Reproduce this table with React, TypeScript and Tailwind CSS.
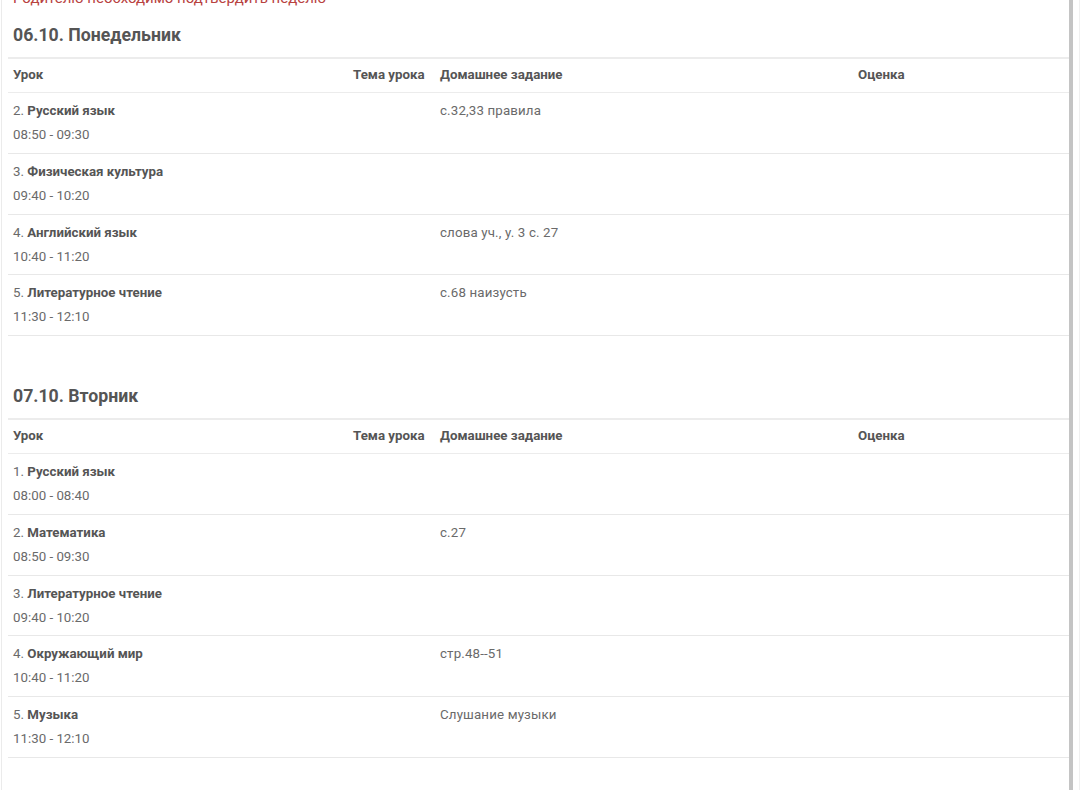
import React from "react";

type Lesson = { n: number; name: string; time: string; hw?: string };

const days: { title: string; lessons: Lesson[] }[] = [
  {
    title: "06.10. Понедельник",
    lessons: [
      { n: 2, name: "Русский язык", time: "08:50 - 09:30", hw: "с.32,33 правила" },
      { n: 3, name: "Физическая культура", time: "09:40 - 10:20" },
      { n: 4, name: "Английский язык", time: "10:40 - 11:20", hw: "слова уч., у. 3 с. 27" },
      { n: 5, name: "Литературное чтение", time: "11:30 - 12:10", hw: "с.68 наизусть" },
    ],
  },
  {
    title: "07.10. Вторник",
    lessons: [
      { n: 1, name: "Русский язык", time: "08:00 - 08:40" },
      { n: 2, name: "Математика", time: "08:50 - 09:30", hw: "с.27" },
      { n: 3, name: "Литературное чтение", time: "09:40 - 10:20" },
      { n: 4, name: "Окружающий мир", time: "10:40 - 11:20", hw: "стр.48--51" },
      { n: 5, name: "Музыка", time: "11:30 - 12:10", hw: "Слушание музыки" },
    ],
  },
];

const cols = "grid grid-cols-[340px_87px_418px_1fr]";

function Day({ title, lessons }: { title: string; lessons: Lesson[] }) {
  return (
    <section>
      <h2 className="pl-[5px] text-[17.7px] leading-[24px] font-bold text-[#555]">{title}</h2>
      <div className="mt-[10px]">
        <div className={`${cols} h-[36px] items-center border-t-2 border-b border-[#ececec] text-[13.3px] font-bold text-[#555]`}>
          <div className="px-[5px] pb-[2px]">Урок</div>
          <div className="px-[5px] pb-[2px]">Тема урока</div>
          <div className="px-[5px] pb-[2px]">Домашнее задание</div>
          <div className="px-[5px] pb-[2px]">Оценка</div>
        </div>
        {lessons.map((l, i) => (
          <div key={i} className={`${cols} h-[60.75px] box-border border-b border-[#e8e8e8] text-[13.3px] leading-[24px] text-[#6a6a6a]`}>
            <div className="px-[5px] pt-[6px]">
              <div>
                {l.n}. <span className="font-bold text-[#555]">{l.name}</span>
              </div>
              <div>{l.time}</div>
            </div>
            <div className="px-[5px] pt-[6px]"></div>
            <div className="px-[5px] pt-[6px] tracking-[0.15px]">{l.hw ?? ""}</div>
            <div className="px-[5px] pt-[6px]"></div>
          </div>
        ))}
      </div>
    </section>
  );
}

export default function App() {
  return (
    <div
      className="w-[1080px] h-[790px] overflow-hidden bg-white flex [font-feature-settings:'liga'_0,'calt'_0]"
      style={{ fontFamily: "Roboto, 'Noto Sans', sans-serif" }}
    >
      <div className="w-[1px] shrink-0"></div>
      <div className="w-[1px] shrink-0 bg-[#ebebeb]"></div>
      <div className="w-[6px] shrink-0"></div>
      <div className="w-[1061px] shrink-0">
        <div className="mt-[-12px] h-[20px] pl-[5px] text-[15px] leading-[20px] text-[#b8423f]">
          Родителю необходимо подтвердить неделю
        </div>
        <div className="mt-[15px]">
          <Day {...days[0]} />
        </div>
        <div className="mt-[48px]">
          <Day {...days[1]} />
        </div>
      </div>
      <div className="w-[4px] shrink-0 bg-[#c4c4c4]"></div>
      <div className="w-[6px] shrink-0"></div>
      <div className="w-[1px] shrink-0 bg-[#f0f0f0]"></div>
    </div>
  );
}
